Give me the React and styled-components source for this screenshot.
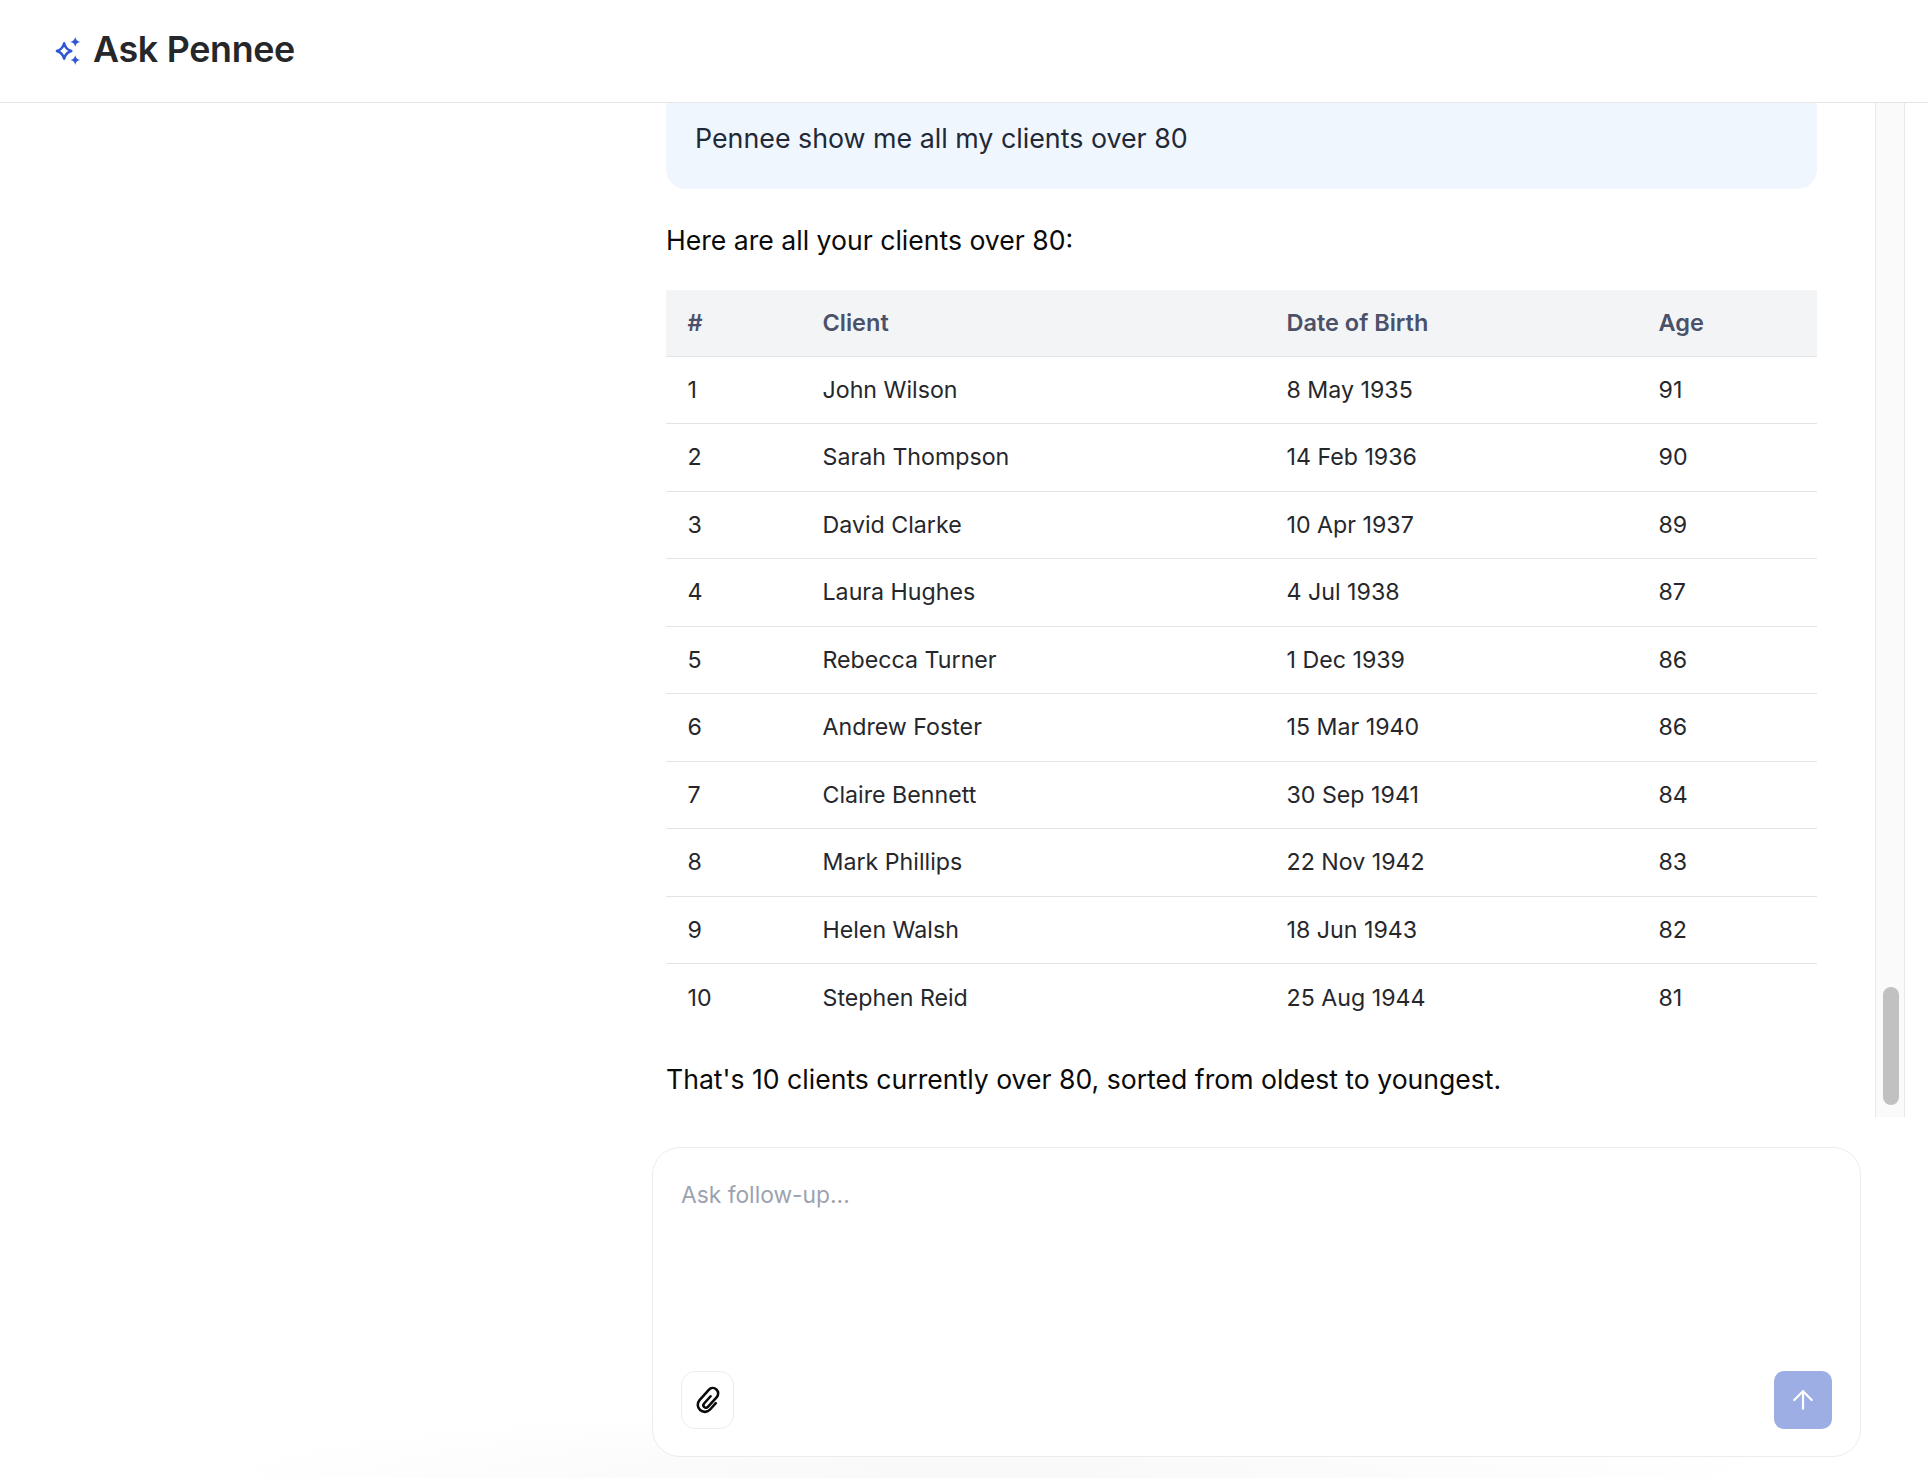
import React from 'react'
import styled, { createGlobalStyle } from 'styled-components'
import { ArrowUp } from 'lucide-react'

const clients = [
  ['1', 'John Wilson', '8 May 1935', '91'],
  ['2', 'Sarah Thompson', '14 Feb 1936', '90'],
  ['3', 'David Clarke', '10 Apr 1937', '89'],
  ['4', 'Laura Hughes', '4 Jul 1938', '87'],
  ['5', 'Rebecca Turner', '1 Dec 1939', '86'],
  ['6', 'Andrew Foster', '15 Mar 1940', '86'],
  ['7', 'Claire Bennett', '30 Sep 1941', '84'],
  ['8', 'Mark Phillips', '22 Nov 1942', '83'],
  ['9', 'Helen Walsh', '18 Jun 1943', '82'],
  ['10', 'Stephen Reid', '25 Aug 1944', '81'],
]

const GlobalStyle = createGlobalStyle`
  html, body {
    margin: 0;
    padding: 0;
    background: #fff;
    font-family: Inter, "Open Sans", sans-serif;
  }
`

const Page = styled.div`
  width: 1928px;
  height: 1478px;
  display: flex;
  flex-direction: column;
  overflow: hidden;
  background: radial-gradient(ellipse 800px 70px at 990px 100%, #f8f8f9, #fff 100%);
`

const Header = styled.header`
  height: 102px;
  flex: none;
  box-sizing: content-box;
  display: flex;
  align-items: center;
  gap: 10px;
  padding: 0 0 0 53px;
  background: #fff;
  border-bottom: 1px solid #e5e5e5;
`

const Title = styled.h1`
  margin: 0 0 4px;
  font-size: 35.800px;
  font-weight: 600;
  letter-spacing: -0.3px;
  color: #26272b;
`

const ChatRow = styled.div`
  height: 1014px;
  flex: none;
  display: flex;
  padding-left: 666px;
  overflow: hidden;
`

const Messages = styled.div`
  width: 1151px;
  display: flex;
  flex-direction: column;
  justify-content: flex-end;
  padding-bottom: 21px;
`

const Bubble = styled.div`
  padding: 40px 29px 34px;
  border-radius: 0 0 20px 20px;
  background: #eff6fe;
  font-size: 26.800px;
  line-height: 34px;
  color: #1f2937;
`

const Reply = styled.p`
  margin: ${p => p.$top}px 0 ${p => p.$bottom}px;
  font-size: 26.600px;
  line-height: 34px;
  color: #0a0a0a;
`

const Table = styled.table`
  width: 100%;
  border-collapse: collapse;
  table-layout: fixed;
  font-size: 23.200px;
`

const HeadCell = styled.th`
  box-sizing: border-box;
  width: ${p => p.$width}px;
  height: 66px;
  padding: 0 21.500px;
  text-align: left;
  font-size: 23.500px;
  font-weight: 600;
  color: #4b5168;
  background: #f3f4f6;
  border-bottom: 1px solid #e2e4e8;
`

const Cell = styled.td`
  box-sizing: border-box;
  height: 67.500px;
  padding: 0 21.500px;
  color: #26272b;
`

const Row = styled.tr`
  border-bottom: 1px solid #e2e4e8;
  &:last-child {
    border-bottom: none;
  }
`

const Track = styled.div`
  width: 30px;
  margin-left: 58px;
  box-sizing: border-box;
  display: flex;
  flex-direction: column;
  justify-content: flex-end;
  align-items: flex-start;
  padding: 0 0 12px 7px;
  background: #fafafa;
  border-left: 1px solid #e8e8e8;
  border-right: 1px solid #e8e8e8;
`

const Thumb = styled.div`
  width: 16px;
  height: 118px;
  border-radius: 8px;
  background: #c1c1c1;
`

const Composer = styled.div`
  width: 1209px;
  height: 310px;
  flex: none;
  box-sizing: border-box;
  margin: 30px 0 0 652px;
  padding: 27px 28px 27px;
  display: flex;
  flex-direction: column;
  justify-content: space-between;
  background: #fff;
  border: 1px solid #ebecef;
  border-radius: 28px;
`

const Placeholder = styled.div`
  font-size: 22.800px;
  line-height: 40px;
  color: #9ca3af;
`

const Actions = styled.div`
  display: flex;
  align-items: center;
  justify-content: space-between;
`

const AttachButton = styled.button`
  width: 53px;
  height: 58px;
  padding: 0;
  display: flex;
  align-items: center;
  justify-content: center;
  background: #fff;
  border: 1px solid #ebecef;
  border-radius: 14px;
`

const SendButton = styled.button`
  width: 58px;
  height: 58px;
  padding: 0;
  display: flex;
  align-items: center;
  justify-content: center;
  color: #fff;
  background: #9caee3;
  border: none;
  border-radius: 10px;
`

function SparkleIcon() {
  return (
    <svg width="30" height="30" viewBox="0 0 27 27" fill="none">
      <path d="M10 6.500 C11 10.500 12.500 12.300 16.500 13.500 C12.500 14.700 11 16.500 10 20.500 C9 16.500 7.500 14.700 3.500 13.500 C7.500 12.300 9 10.500 10 6.500Z" stroke="#3056d3" strokeWidth="2.200" strokeLinejoin="round" />
      <path d="M20 1 C20.500 3.500 21.800 4.800 24.500 5.300 C21.800 5.800 20.500 7.100 20 9.600 C19.500 7.100 18.200 5.800 15.500 5.300 C18.200 4.800 19.500 3.500 20 1Z" fill="#3056d3" />
      <path d="M20 17.400 C20.500 19.900 21.800 21.200 24.500 21.700 C21.800 22.200 20.500 23.500 20 26 C19.500 23.500 18.200 22.200 15.500 21.700 C18.200 21.200 19.500 19.900 20 17.400Z" fill="#3056d3" />
    </svg>
  )
}

function ClipIcon() {
  return (
    <svg width="34" height="34" viewBox="0 0 24 24" fill="none" stroke="#0a0a0a" strokeWidth="1.800" strokeLinecap="round">
      <path transform="rotate(42 12 12)" d="M11.600 8.800v6.900a1.800 1.800 0 0 0 3.600 0V6.300a3.800 3.800 0 0 0-7.600 0V16a5 5 0 0 0 10 0V10" />
    </svg>
  )
}

export default function App() {
  return (
    <Page>
      <GlobalStyle />
      <Header>
        <SparkleIcon />
        <Title>Ask Pennee</Title>
      </Header>
      <ChatRow>
        <Messages>
          <Bubble>Pennee show me all my clients over 80</Bubble>
          <Reply $top={34} $bottom={33}>Here are all your clients over 80:</Reply>
          <Table>
            <thead>
              <tr>
                <HeadCell $width={135}>#</HeadCell>
                <HeadCell $width={464}>Client</HeadCell>
                <HeadCell $width={372}>Date of Birth</HeadCell>
                <HeadCell>Age</HeadCell>
              </tr>
            </thead>
            <tbody>
              {clients.map(row => (
                <Row key={row[0]}>
                  {row.map(value => (
                    <Cell key={value}>{value}</Cell>
                  ))}
                </Row>
              ))}
            </tbody>
          </Table>
          <Reply $top={31} $bottom={0}>That's 10 clients currently over 80, sorted from oldest to youngest.</Reply>
        </Messages>
        <Track>
          <Thumb />
        </Track>
      </ChatRow>
      <Composer>
        <Placeholder>Ask follow-up...</Placeholder>
        <Actions>
          <AttachButton aria-label="Attach file">
            <ClipIcon />
          </AttachButton>
          <SendButton aria-label="Send">
            <ArrowUp size={30} strokeWidth={1.75} />
          </SendButton>
        </Actions>
      </Composer>
    </Page>
  )
}
